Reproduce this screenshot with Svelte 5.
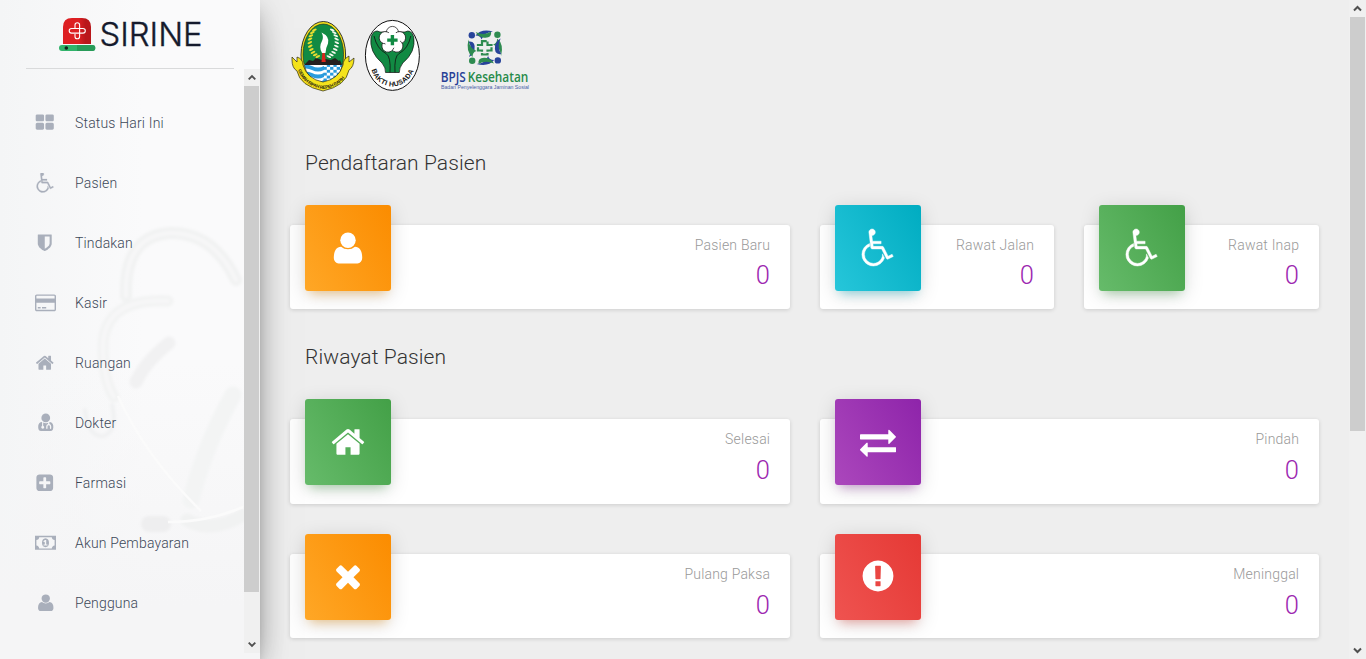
<script>
  const user = [
    { d: 'M1536 1399q0 109-62.5 187t-150.5 78h-854q-88 0-150.5-78t-62.5-187q0-85 8.5-160.5t31.5-152 58.5-131 94-89 134.5-34.5q131 128 313 128t313-128q76 0 134.5 34.5t94 89 58.5 131 31.5 152 8.5 160.5z', t: 'translate(-94 0) scale(1.105 1)' },
    { d: 'M1280 512q0 159-112.5 271.5t-271.5 112.5-271.5-112.5-112.5-271.5 112.5-271.5 271.5-112.5 271.5 112.5 112.5 271.5z' }
  ];
  const icons = {
    grid: { box: '0 0 1792 1792', paths: [{ d: 'M832 1024v384q0 52-38 90t-90 38h-512q-52 0-90-38t-38-90v-384q0-52 38-90t90-38h512q52 0 90 38t38 90zm0-768v384q0 52-38 90t-90 38h-512q-52 0-90-38t-38-90v-384q0-52 38-90t90-38h512q52 0 90 38t38 90zm896 768v384q0 52-38 90t-90 38h-512q-52 0-90-38t-38-90v-384q0-52 38-90t90-38h512q52 0 90 38t38 90zm0-768v384q0 52-38 90t-90 38h-512q-52 0-90-38t-38-90v-384q0-52 38-90t90-38h512q52 0 90 38t38 90z' }] },
    wheelchair: { box: '0 0 1792 1792', paths: [{ d: 'M1167 1187l102 204q-58 179-210 290t-339 111q-156 0-288.5-77.5t-210-210-77.5-288.5q0-181 104.5-330t274.5-211l17 131q-122 54-195 165.5t-73 244.5q0 185 131.5 316.5t316.5 131.5q126 0 232.5-65t165-175.5 49.5-236.5zm480 18l58 114-256 128q-13 7-29 7-40 0-57-35l-239-477h-472q-24 0-42.5-16.5t-21.5-40.5l-96-779q-2-17 6-42 14-51 57-82.5t97-31.5q66 0 113 47t47 113q0 69-52 117.5t-120 41.5l37 289h423v128h-407l16 128h455q40 0 57 35l228 455z', fill: 'nonzero', w: 22 }] },
    shield: { box: '0 0 1792 1792', paths: [{ d: 'M1344 960v-640h-448v1137q119-63 213-137 235-184 235-360zm192-768v768q0 86-33.5 170.5t-83 150-118 127.5-126.5 103-121 77.5-89.5 49.5-42.5 20q-12 6-26 6t-26-6q-16-7-42.5-20t-89.5-49.5-121-77.5-126.5-103-118-127.5-83-150-33.5-170.5v-768q0-26 19-45t45-19h1152q26 0 45 19t19 45z' }] },
    card: { box: '0 0 1920 1792', paths: [{ d: 'M1760 128q66 0 113 47t47 113v1216q0 66-47 113t-113 47h-1600q-66 0-113-47t-47-113v-1216q0-66 47-113t113-47h1600zm-1600 128q-13 0-22.5 9.5t-9.5 22.5v224h1664v-224q0-13-9.5-22.5t-22.5-9.5h-1600zm1600 1280q13 0 22.5-9.5t9.5-22.5v-608h-1664v608q0 13 9.5 22.5t22.5 9.5h1600zm-1504-128v-128h256v128h-256zm384 0v-128h384v128h-384z' }] },
    home: { box: '0 0 1792 1792', paths: [{ d: 'M1472 992v480q0 26-19 45t-45 19h-384v-384h-256v384h-384q-26 0-45-19t-19-45v-480q0-1 .5-3t.5-3l575-474 575 474q1 2 1 6zm223-69l-62 74q-8 9-21 11h-3q-13 0-21-7l-692-577-692 577q-12 8-24 7-13-2-21-11l-62-74q-8-10-7-23.5t11-21.5l719-599q32-26 76-26t76 26l244 204v-195q0-14 9-23t23-9h192q14 0 23 9t9 23v408l219 182q10 8 11 21.5t-7 23.5z' }] },
    doctor: { box: '0 0 1792 1792', paths: [
      { d: 'M1296 448a400 400 0 1 1-800 0a400 400 0 1 1 800 0z' },
      { d: 'M560 830Q250 850 205 1180Q160 1664 470 1664H1322Q1632 1664 1587 1180Q1542 850 1232 830V1020Q1400 1050 1400 1240V1400Q1400 1460 1340 1460T1280 1400V1240Q1280 1120 1170 1120T1060 1240V1400Q1060 1460 1000 1460T940 1400V1240Q940 1050 1110 1020V890Q896 1020 660 880V1170Q760 1210 760 1320Q760 1450 620 1450T480 1320Q480 1210 560 1170z' }
    ] },
    plus: { box: '0 0 1792 1792', paths: [{ d: 'M1408 960v-128q0-26-19-45t-45-19h-320v-320q0-26-19-45t-45-19h-128q-26 0-45 19t-19 45v320h-320q-26 0-45 19t-19 45v128q0 26 19 45t45 19h320v320q0 26 19 45t45 19h128q26 0 45-19t19-45v-320h320q26 0 45-19t19-45zm256-544v960q0 119-84.5 203.5t-203.5 84.5h-960q-119 0-203.5-84.5t-84.5-203.5v-960q0-119 84.5-203.5t203.5-84.5h960q119 0 203.5 84.5t84.5 203.5z' }] },
    money: { box: '0 0 1920 1792', paths: [{ d: 'M0 256H1920V1536H0zM384 384Q384 490 309 565T128 640V1152Q234 1152 309 1227T384 1408H1536Q1536 1302 1611 1227T1792 1152V640Q1686 640 1611 565T1536 384zM960 480Q1280 520 1280 896T960 1312Q640 1272 640 896T960 480zM1024 640H910L760 760L830 840L896 790V1060H780V1152H1140V1060H1024z' }] },
    user: { box: '0 0 1792 1792', paths: user },
    exchange: { box: '0 0 1792 1792', paths: [{ d: 'M1792 1184v192q0 13-9.5 22.5t-22.5 9.5h-1376v192q0 13-9.5 22.5t-22.5 9.5q-12 0-24-10l-319-320q-9-9-9-22 0-14 9-23l320-320q9-9 23-9 13 0 22.5 9.5t9.5 22.5v192h1376q13 0 22.5 9.5t9.5 22.5zm0-544q0 14-9 23l-320 320q-9 9-23 9-13 0-22.5-9.5t-9.5-22.5v-192h-1376q-13 0-22.5-9.5t-9.5-22.5v-192q0-13 9.5-22.5t22.5-9.5h1376v-192q0-14 9-23t23-9q12 0 24 10l319 319q9 9 9 23z' }] },
    times: { box: '0 0 1792 1792', paths: [{ d: 'M1490 1322q0 40-28 68l-136 136q-28 28-68 28t-68-28l-294-294-294 294q-28 28-68 28t-68-28l-136-136q-28-28-28-68t28-68l294-294-294-294q-28-28-28-68t28-68l136-136q28-28 68-28t68 28l294 294 294-294q28-28 68-28t68 28l136 136q28 28 28 68t-28 68l-294 294 294 294q28 28 28 68z' }] },
    alert: { box: '0 0 1792 1792', paths: [{ d: 'M896 128q209 0 385.5 103t279.5 279.5 103 385.5-103 385.5-279.5 279.5-385.5 103-385.5-103-279.5-279.5-103-385.5 103-385.5 279.5-279.5 385.5-103zm128 1247v-190q0-14-9-23.5t-22-9.5h-192q-13 0-23 10t-10 23v190q0 13 10 23t23 10h192q13 0 22-9.5t9-23.5zm-2-344l18-621q0-12-10-18-10-8-24-8h-220q-14 0-24 8-10 6-10 18l17 621q0 10 10 17.5t24 7.5h185q14 0 23.5-7.5t10.5-17.5z' }] }
  };

  const menu = [
    ['grid', 'Status Hari Ini'],
    ['wheelchair', 'Pasien'],
    ['shield', 'Tindakan'],
    ['card', 'Kasir'],
    ['home', 'Ruangan'],
    ['doctor', 'Dokter'],
    ['plus', 'Farmasi'],
    ['money', 'Akun Pembayaran'],
    ['user', 'Pengguna']
  ];

  const admissions = [
    { icon: 'user', tone: 'orange', label: 'Pasien Baru' },
    { icon: 'wheelchair', tone: 'cyan', label: 'Rawat Jalan' },
    { icon: 'wheelchair', tone: 'green', label: 'Rawat Inap' }
  ];
  const history = [
    { icon: 'home', tone: 'green', label: 'Selesai' },
    { icon: 'exchange', tone: 'purple', label: 'Pindah' },
    { icon: 'times', tone: 'orange', label: 'Pulang Paksa' },
    { icon: 'alert', tone: 'red', label: 'Meninggal' }
  ];
  const petals = [0, 72, 144, 216, 288];
  const quarters = [0, 90, 180, 270];
  const checks = [];
  for (let r = 0; r < 8; r++) for (let c = 0; c < 7; c++) if ((r + c) % 2) checks.push([323.5 + c * 3.3, 64 + r * 2.9]);
  const sprigs = Array.from({ length: 10 }, (_, i) => {
    const a = (i / 9) * 2 - 0.85;
    return [Math.cos(a) * 13.5, Math.sin(a) * 16];
  });
</script>

{#snippet icon(name)}
  <svg class="icon icon-{name}" viewBox={icons[name].box} aria-hidden="true">
    {#each icons[name].paths as p}<path d={p.d} transform={p.t} fill="currentColor" stroke={p.w ? 'currentColor' : 'none'} stroke-width={p.w} fill-rule={p.fill ?? 'evenodd'} />{/each}
  </svg>
{/snippet}

{#snippet chevron(down)}
  <svg class="chev" class:down viewBox="0 0 17 17" aria-hidden="true"><path d="M5 10.5 8.5 7l3.5 3.5" fill="none" stroke="#505050" stroke-width="2" /></svg>
{/snippet}

{#snippet stat(s)}
  <article class="card">
    <div class="tile {s.tone}">{@render icon(s.icon)}</div>
    <div class="figures">
      <p>{s.label}</p>
      <h3>0</h3>
    </div>
  </article>
{/snippet}

<div class="page">
  <aside>
    <svg class="backdrop" viewBox="0 0 260 659" aria-hidden="true">
      <defs><filter id="soft" x="-20%" y="-20%" width="140%" height="140%"><feGaussianBlur stdDeviation="1.8" /></filter></defs>
      <g fill="none" stroke-linecap="round" filter="url(#soft)">
        <path d="M126 296Q124 236 170 233Q213 232 236 280" stroke="#f1f2f2" stroke-width="12" />
        <path d="M126 296Q124 236 170 233Q213 232 236 280" stroke="#f7f7f8" stroke-width="4" />
        <path d="M168 301Q105 298 103 345Q103 380 114 397" stroke="#f2f3f3" stroke-width="11" />
        <path d="M168 301Q105 298 103 345Q103 380 114 397" stroke="#f7f7f8" stroke-width="4" />
        <path d="M136 382Q145 362 169 343" stroke="#f1f1f2" stroke-width="13" />
        <path d="M85 410Q88 438 104 436Q118 430 112 405" stroke="#f0f1f2" stroke-width="4" />
        <path d="M233 395Q205 445 191 500" stroke="#f3f4f4" stroke-width="17" />
        <path d="M187 520Q212 534 243 515" stroke="#f1f2f2" stroke-width="13" />
        <path d="M149 524H163" stroke="#eeeeef" stroke-width="16" />
      </g>
      <path d="M118 396Q145 456 201 511M168 522Q208 522 243 507" fill="none" stroke="#fbfbfb" stroke-width="2.5" />
    </svg>
    <header>
      <svg class="siren" viewBox="58 16 38 36" aria-hidden="true">
        <defs><linearGradient id="lamp"><stop offset=".55" stop-color="#dd1f22" /><stop offset=".8" stop-color="#b9171b" /></linearGradient></defs>
        <path d="M63 44V27q0-9 9-9h10q9 0 9 9v17z" fill="url(#lamp)" />
        <rect x="59" y="45" width="36.3" height="6" rx="3" fill="#31b36b" />
        <path d="M77 45h15.3a3 3 0 0 1 0 6H77z" fill="#289b59" />
        <circle cx="66.3" cy="48" r="1.8" fill="#10231b" />
        <path d="M75 28V25a2.3 2.3 0 0 1 4.6 0v11.5a2.3 2.3 0 0 1-4.6 0V34M75 28.5H71.5a2.3 2.3 0 0 0 0 4.6H83a2.3 2.3 0 0 0 0-4.6H75" fill="none" stroke="#fff" stroke-width="1.1" />
      </svg>
      <svg class="word" viewBox="0 0 103 34"><text x="-.5" y="28" textLength="103" lengthAdjust="spacingAndGlyphs">SIRINE</text></svg>
    </header>
    <div class="menu">
      <nav>
        {#each menu as [name, label]}
          <a href="#menu"><span class="glyph" class:wide={name === 'card' || name === 'money'}>{@render icon(name)}</span>{label}</a>
        {/each}
      </nav>
      <div class="scroll side">{@render chevron(false)}<i></i>{@render chevron(true)}</div>
    </div>
  </aside>

  <main>
    <div class="logos">
      <svg width="66" height="76" viewBox="290 18 66 76" aria-hidden="true">
        <defs>
          <clipPath id="field"><ellipse cx="323.3" cy="54.5" rx="20.3" ry="30.5" /></clipPath>
          <path id="motto" d="M298 70Q304 86.500 323.300 89Q343 86.500 349 70" />
        </defs>
        <ellipse cx="323.3" cy="55" rx="22.3" ry="33.5" fill="#f3e21b" stroke="#222" stroke-width=".9" />
        <g clip-path="url(#field)">
          <path d="M300 20h47v45h-47z" fill="#118a43" />
          <path d="M300 64h47v30h-47z" fill="#fff" />
          <path d="M300 66q6-3 12 0t12 0v4q-6 3-12 0t-12 0zM300 73q6-3 12 0t12 0v4q-6 3-12 0t-12 0zM300 80q6-3 12 0t12 0v4q-6 3-12 0t-12 0z" fill="#2a9bdc" />
          {#each checks as [x, y]}<rect {x} {y} width="3.3" height="2.9" fill="#2a9bdc" />{/each}
          <path d="M304 65l5-5 4 1 3-3 6 2 3-1 6 1 4-2 4 3 1-1 2 5z" fill="#241f1e" />
        </g>
        <ellipse cx="323.3" cy="54.5" rx="20.3" ry="30.5" fill="none" stroke="#222" stroke-width=".6" />
        <g transform="translate(323.3 42)">
          {#each sprigs as [x, y]}
            <ellipse cx={x} cy={y} rx="2.5" ry="1" fill="#f6f8ee" transform="rotate(25 {x} {y})" />
            <ellipse cx={-x} cy={y} rx="2.5" ry="1.1" fill="#e9dc31" transform="rotate(-25 {-x} {y})" />
          {/each}
        </g>
        <path d="M321.500 62l1-10h2.200l1 10z" fill="#d9261c" />
        <path d="M322 53q-3.500-6 0-12 2-4-.5-8.500 8.500 4 6.500 11-2.500 5-2.500 9.500z" fill="#fff" />
        <path d="M292 57l5 5V57q6 2 6 8 4 14 20 17 16-3 20-17 0-6 6-9v6l5-4q0 9-5 12-3 16-26 21-23-5-26-20-5-3-5-11z" fill="#f5e31c" stroke="#2b2915" stroke-width=".7" />
        <text class="motto"><textPath href="#motto" textLength="58">GEMAH RIPAH REPEH RAPIH</textPath></text>
      </svg>
      <svg width="57" height="74" viewBox="364 18 57 74" aria-hidden="true">
        <defs><path id="bakti" d="M371.500 69.500Q376 85.500 392.500 86.500Q410 85 415.500 66" /></defs>
        <ellipse cx="392.4" cy="55.4" rx="27" ry="35" fill="#fff" stroke="#111" stroke-width="1" />
        <path d="M385.500 72.500Q386 68 382 63Q369 52 371 37Q374 28.500 380 32H405Q411 28.500 413.800 37Q416 52 402.800 63Q399 68 399.300 72.500z" fill="#118a43" stroke="#111" stroke-width=".7" />
        <path d="M374 36Q377 49 386 53.500Q391 56.500 390 72.500M410.800 36Q408 49 399 53.500Q394 56.500 395 72.500" fill="none" stroke="#111" stroke-width=".8" />
        {#each petals as a}<circle cx="392.400" cy="32.500" r="6.100" fill="#fff" stroke="#111" stroke-width=".7" transform="rotate({a} 392.400 40)" />{/each}
        <circle cx="392.400" cy="40" r="8" fill="#fff" />
        <path d="M390.700 35h3.400v3.500h3.500v3.300h-3.500v3.500h-3.400v-3.500h-3.500v-3.300h3.500z" fill="#118a43" />
        <text class="bakti"><textPath href="#bakti" textLength="57">BAKTI HUSADA</textPath></text>
      </svg>
      <svg class="bpjs" width="90" height="66" viewBox="440 28 90 66">
        {#each quarters as a, i}
          <g transform="rotate({a} 484.800 47.800)" fill={i % 2 ? '#2e8b50' : '#27439a'}>
            <circle cx="471.800" cy="35.200" r="3.200" />
            <path d="M475.500 35.500Q481 28.500 493 31.500Q484 32.500 481.500 39.500Q480.500 35.500 475.500 35.500z" />
            <path d="M468.500 41.500Q476 40.500 474.500 50Q473 55 469 57Q473 48.500 468.500 41.500z" />
          </g>
        {/each}
        <path d="M482 45V41.200h5.500V45H491.500v5.500H487.500v4H482v-4H478V45z" fill="none" stroke="#2e8b50" stroke-width="2.200" stroke-dasharray="8.500 1.200" />
        <text class="name" x="440.800" y="81.800" fill="#273f96" textLength="25" lengthAdjust="spacingAndGlyphs">BPJS</text>
        <text class="name" x="467.800" y="81.800" fill="#268a49" textLength="60.500" lengthAdjust="spacingAndGlyphs">Kesehatan</text>
        <text class="sub" x="441" y="88.700" fill="#465da6" textLength="88" lengthAdjust="spacingAndGlyphs">Badan Penyelenggara Jaminan Sosial</text>
      </svg>
    </div>

    <h2>Pendaftaran Pasien</h2>
    <section class="three">{#each admissions as s}{@render stat(s)}{/each}</section>
    <h2 class="second">Riwayat Pasien</h2>
    <section class="two">{#each history as s}{@render stat(s)}{/each}</section>
  </main>
  <div class="scroll window">{@render chevron(false)}<i></i>{@render chevron(true)}</div>
</div>

<style>
  :global(body) { margin: 0; overflow: hidden; }
  .page { display: flex; width: 1366px; height: 659px; overflow: hidden; background: #eee; font-family: Roboto, sans-serif; font-weight: 300; color: #3c4858; }
  svg { display: block; flex: none; }
  aside { position: relative; z-index: 2; flex: none; display: flex; flex-direction: column; width: 260px; height: 659px; background: linear-gradient(180deg, rgba(245,245,246,0) 55%, #f5f5f6 92%), linear-gradient(90deg, #f4f5f6, #fafafb 55%, #fafafb); box-shadow: 0 16px 38px -12px rgba(0,0,0,.56), 0 4px 25px rgba(0,0,0,.12), 0 8px 10px -5px rgba(0,0,0,.2); }
  .backdrop { position: absolute; inset: 0; width: 260px; height: 659px; }
  header { position: relative; display: flex; align-items: flex-start; gap: 4px; box-sizing: border-box; height: 69px; margin: 0 26px; padding: 16px 0 0 32px; border-bottom: 1px solid #d9dadb; }
  .siren { width: 38px; height: 36px; }
  .word { width: 103px; height: 34px; overflow: visible; margin-top: 2px; }
  .word text { font: 300 32px Inter, sans-serif; fill: #151a2c; stroke: #151a2c; stroke-width: .4px; }
  .menu { position: relative; flex: 1; display: flex; min-height: 0; }
  nav { flex: 1; padding-top: 24px; overflow: hidden; }
  a { display: flex; align-items: center; height: 60px; padding-left: 30px; font-size: 14px; line-height: 30px; letter-spacing: .17px; color: #3c4858; text-decoration: none; }
  .glyph { display: grid; place-items: center; width: 30px; margin-right: 15px; color: #a9afbb; }
  .glyph .icon { width: 19.500px; height: 19.500px; margin-left: -1px; }
  .glyph .icon-user, .glyph .icon-doctor { margin-left: 1px; }
  .glyph.wide .icon { width: 21px; height: 19.600px; margin-left: 0; }
  .scroll { flex: none; display: flex; flex-direction: column; background: #f0f0f0; }
  .scroll i { background: #cdcdcd; margin: 0 1px; }
  .chev { width: 17px; height: 17px; }
  .chev.down { transform: rotate(180deg); margin-top: auto; }
  .side { width: 16px; height: 584px; }
  .side .chev { width: 16px; }
  .side i { height: 506px; margin-left: 0; }
  .window { width: 17px; }
  .window i { height: 414px; }
  main { flex: 1; padding: 18px 30px 0; min-width: 0; }
  .logos { display: flex; align-items: flex-start; height: 76px; }
  .logos svg + svg { margin-left: 8px; }
  .logos .bpjs { margin: 10px 0 0 19px; overflow: visible; }
  .motto { font: 700 4.600px "Liberation Sans", sans-serif; fill: #302b13; }
  .bakti { font: 700 7px "Liberation Sans", sans-serif; fill: #151515; }
  .name { font: 600 13.500px "Open Sans", sans-serif; }
  .sub { font: 400 5.600px "Liberation Sans", sans-serif; }
  h2 { margin: 54px 15px 0; height: 30px; font-size: 21px; line-height: 30px; letter-spacing: .1px; font-weight: 300; color: #333; }
  h2.second { margin-top: 33px; }
  section { display: grid; gap: 50px 30px; margin-top: 47px; }
  .three { grid-template: 84px / 500px 234px 235px; }
  .two { grid-template: 85px 84px / 500px 499px; }
  .card { display: flex; justify-content: space-between; box-sizing: border-box; padding: 0 20px 0 15px; border-radius: 3px; background: #fff; box-shadow: 0 1px 4px rgba(0,0,0,.14); }
  .tile { display: grid; place-items: center; width: 86px; height: 86px; margin-top: -20px; border-radius: 3px; color: #fff; }
  .tile .icon { width: 36px; height: 36px; }
  .tile .icon-wheelchair { margin-left: -2px; overflow: visible; }
  .tile .icon-times, .tile .icon-alert { margin-top: -2px; }
  .orange { background: linear-gradient(60deg, #ffa726, #fb8c00); box-shadow: 0 4px 20px rgba(0,0,0,.14), 0 7px 10px -5px rgba(255,152,0,.4); }
  .green { background: linear-gradient(60deg, #66bb6a, #43a047); box-shadow: 0 4px 20px rgba(0,0,0,.14), 0 7px 10px -5px rgba(76,175,80,.4); }
  .cyan { background: linear-gradient(60deg, #26c6da, #00acc1); box-shadow: 0 4px 20px rgba(0,0,0,.14), 0 7px 10px -5px rgba(0,188,212,.4); }
  .purple { background: linear-gradient(60deg, #ab47bc, #8e24aa); box-shadow: 0 4px 20px rgba(0,0,0,.14), 0 7px 10px -5px rgba(156,39,176,.4); }
  .red { background: linear-gradient(60deg, #ef5350, #e53935); box-shadow: 0 4px 20px rgba(0,0,0,.14), 0 7px 10px -5px rgba(244,67,54,.4); }
  .figures { text-align: right; padding-top: 10px; }
  p { margin: 0 -.2px 0 0; font-size: 14px; line-height: 21px; letter-spacing: .2px; color: #999; }
  h3 { margin: 0; font-size: 25.500px; line-height: 40px; font-weight: 300; color: #9c27b0; }
  .three h3 { line-height: 38px; }
</style>
